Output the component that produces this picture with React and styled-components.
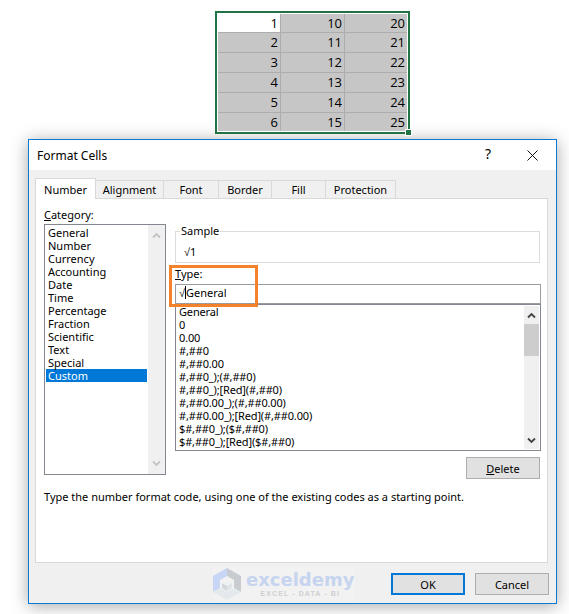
import React from 'react';
import styled, { createGlobalStyle } from 'styled-components';

const GlobalStyle = createGlobalStyle`
  html, body {
    margin: 0;
    padding: 0;
    background: #ffffff;
    overflow: hidden;
  }
  body {
    font-family: "Noto Sans", "Liberation Sans", sans-serif;
    font-size: 11px;
    color: #000000;
  }
`;

const rows = [
  [1, 10, 20],
  [2, 11, 21],
  [3, 12, 22],
  [4, 13, 23],
  [5, 14, 24],
  [6, 15, 25],
];

const categories = [
  'General', 'Number', 'Currency', 'Accounting', 'Date', 'Time', 'Percentage',
  'Fraction', 'Scientific', 'Text', 'Special', 'Custom',
];

const formats = [
  'General', '0', '0.00', '#,##0', '#,##0.00', '#,##0_);(#,##0)',
  '#,##0_);[Red](#,##0)', '#,##0.00_);(#,##0.00)', '#,##0.00_);[Red](#,##0.00)',
  '$#,##0_);($#,##0)', '$#,##0_);[Red]($#,##0)',
];

const tabs = ['Number', 'Alignment', 'Font', 'Border', 'Fill', 'Protection'];
const tabWidths = [61, 68, 55, 53, 54, 70];

const Chevron = ({ down, color }) => (
  <svg width="9" height="7" viewBox="0 0 9 7" style={{ transform: down ? 'rotate(180deg)' : 'none' }}>
    <path d="M1 5.5 L4.5 2 L8 5.5" fill="none" stroke={color} strokeWidth="1.8" />
  </svg>
);

const CubeLogo = () => (
  <svg width="28" height="32" viewBox="0 0 28 32">
    <polygon points="14,0 0,8 0,24 7,20 7,12 14,8" fill="#c6d6f4" />
    <polygon points="14,0 28,8 28,24 21,20 21,12 14,8" fill="#c8ccd0" />
    <polygon points="0,24 14,32 28,24 21,20 14,24 7,20" fill="#e3e9ed" />
    <polygon points="14,12 19,15 14,18 9,15" fill="#eef0f2" />
    <polygon points="9,15 14,18 14,23 9,20" fill="#d3d8de" />
    <polygon points="19,15 14,18 14,23 19,20" fill="#dfe3e8" />
  </svg>
);

export default function App() {
  return (
    <Page>
      <GlobalStyle />
      <Sheet>
        <SheetGrid>
          {rows.flat().map((value, i) => (
            <Cell key={i} $active={i === 0}>{value}</Cell>
          ))}
        </SheetGrid>
        <FillHandle />
      </Sheet>

      <Dialog>
        <TitleBar>
          <Title>Format Cells</Title>
          <HelpMark>?</HelpMark>
          <CloseIcon width="11" height="11" viewBox="0 0 11 11">
            <path d="M0.5 0.5 L10.5 10.5 M10.5 0.5 L0.5 10.5" stroke="#111" strokeWidth="1" fill="none" />
          </CloseIcon>
        </TitleBar>

        <Body>
          <TabRow>
            {tabs.map((tab, i) => (
              <Tab key={tab} $active={i === 0} $width={tabWidths[i]}>{tab}</Tab>
            ))}
          </TabRow>

          <Panel>
            <Columns>
              <LeftColumn>
                <FieldLabel><u>C</u>ategory:</FieldLabel>
                <CategoryBox>
                  <CategoryList>
                    {categories.map((name) => (
                      <CategoryItem key={name} $selected={name === 'Custom'}>{name}</CategoryItem>
                    ))}
                  </CategoryList>
                  <CategoryScroll>
                    <Chevron color="#c4c4c4" />
                    <Chevron down color="#c4c4c4" />
                  </CategoryScroll>
                </CategoryBox>
              </LeftColumn>

              <RightColumn>
                <SampleBox>
                  <SampleLegend>Sample</SampleLegend>
                  <SampleValue>√1</SampleValue>
                </SampleBox>
                <TypeLabel><u>T</u>ype:</TypeLabel>
                <TypeInput>√<Caret />General</TypeInput>
                <FormatBox>
                  <FormatList>
                    {formats.map((code) => (
                      <FormatItem key={code}>{code}</FormatItem>
                    ))}
                  </FormatList>
                  <FormatScroll>
                    <ArrowSlot><Chevron color="#444" /></ArrowSlot>
                    <Thumb />
                    <ArrowSlot $end><Chevron down color="#444" /></ArrowSlot>
                  </FormatScroll>
                </FormatBox>
                <DeleteRow>
                  <DialogButton $width={74}><u>D</u>elete</DialogButton>
                </DeleteRow>
                <Highlight />
              </RightColumn>
            </Columns>
            <Description>
              Type the number format code, using one of the existing codes as a starting point.
            </Description>
          </Panel>

          <Footer>
            <Watermark>
              <CubeLogo />
              <WatermarkText>
                <WatermarkName>exceldemy</WatermarkName>
                <WatermarkTag>EXCEL - DATA - BI</WatermarkTag>
              </WatermarkText>
            </Watermark>
            <DialogButton $width={74} $primary>OK</DialogButton>
            <DialogButton $width={74}>Cancel</DialogButton>
          </Footer>
        </Body>
      </Dialog>
    </Page>
  );
}

const Page = styled.div`
  width: 569px;
  height: 614px;
  padding-top: 11px;
  box-sizing: border-box;
  display: flex;
  flex-direction: column;
  overflow: hidden;
`;

const Sheet = styled.div`
  position: relative;
  z-index: 1;
  flex: none;
  margin-left: 215px;
  width: 195px;
  height: 123px;
  box-sizing: border-box;
  border: 2px solid #217346;
  padding: 1px;
  background: #ffffff;
`;

const SheetGrid = styled.div`
  display: grid;
  grid-template-columns: 62px 63px 62px;
  grid-template-rows: 18px repeat(4, 19px) 18px;
  gap: 1px;
  background: #adadad;
`;

const Cell = styled.div`
  background: ${(p) => (p.$active ? '#ffffff' : '#c6c6c6')};
  font-family: "Open Sans", sans-serif;
  font-size: 13px;
  line-height: 18px;
  text-align: right;
  padding-right: 2px;
`;

const FillHandle = styled.div`
  position: absolute;
  right: -4px;
  bottom: -4px;
  width: 5px;
  height: 5px;
  background: #217346;
  border: 1px solid #ffffff;
`;

const Dialog = styled.div`
  margin: 5px 0 0 28px;
  width: 529px;
  height: 465px;
  flex: none;
  box-sizing: border-box;
  border: 1px solid #0a7ad1;
  background: #f0f0f0;
  box-shadow: 0 2px 16px rgba(0, 0, 0, 0.35);
  display: flex;
  flex-direction: column;
`;

const TitleBar = styled.div`
  height: 30px;
  flex: none;
  background: #ffffff;
  display: flex;
  align-items: center;
  padding-left: 8px;
`;

const Title = styled.div`
  font-size: 12px;
  flex: 1;
`;

const HelpMark = styled.div`
  font-size: 14px;
  margin: -3px 36px 0 0;
`;

const CloseIcon = styled.svg`
  margin-right: 18px;
`;

const Body = styled.div`
  flex: 1;
  display: flex;
  flex-direction: column;
  padding: 8px 8px 0 6px;
  min-height: 0;
`;

const TabRow = styled.div`
  display: flex;
  align-items: flex-end;
  height: 20px;
  flex: none;
`;

const Tab = styled.div`
  position: relative;
  z-index: ${(p) => (p.$active ? 1 : 0)};
  width: ${(p) => p.$width}px;
  height: ${(p) => (p.$active ? 21 : 18)}px;
  margin-bottom: ${(p) => (p.$active ? -1 : 0)}px;
  box-sizing: border-box;
  border: 1px solid #d9d9d9;
  border-left-width: ${(p) => (p.$active ? 1 : 0)}px;
  border-bottom: ${(p) => (p.$active ? 'none' : '0')};
  background: ${(p) => (p.$active ? '#ffffff' : '#f0f0f0')};
  display: flex;
  align-items: center;
  justify-content: center;
`;

const Panel = styled.div`
  flex: none;
  height: 365px;
  box-sizing: border-box;
  background: #ffffff;
  border: 1px solid #d9d9d9;
  padding: 10px 0 0 8px;
`;

const Columns = styled.div`
  display: flex;
  gap: 9px;
`;

const LeftColumn = styled.div`
  width: 122px;
  flex: none;
`;

const FieldLabel = styled.div`
  height: 15px;
  line-height: 12px;
`;

const CategoryBox = styled.div`
  height: 251px;
  box-sizing: border-box;
  border: 1px solid #828790;
  display: flex;
  background: #ffffff;
`;

const CategoryList = styled.div`
  flex: 1;
  padding: 1px 1px 0 1px;
`;

const CategoryItem = styled.div`
  height: 13px;
  line-height: 13px;
  padding-left: 2px;
  background: ${(p) => (p.$selected ? '#0078d7' : 'transparent')};
  color: ${(p) => (p.$selected ? '#ffffff' : '#000000')};
`;

const CategoryScroll = styled.div`
  width: 17px;
  background: #f0f0f0;
  display: flex;
  flex-direction: column;
  justify-content: space-between;
  align-items: center;
  padding: 7px 0;
  box-sizing: border-box;
`;

const RightColumn = styled.div`
  position: relative;
  width: 366px;
  flex: none;
  padding-top: 22px;
`;

const SampleBox = styled.div`
  position: relative;
  width: 365px;
  height: 32px;
  box-sizing: border-box;
  border: 1px solid #dcdcdc;
  padding: 13px 0 0 8px;
`;

const SampleLegend = styled.div`
  position: absolute;
  top: -8px;
  left: 4px;
  background: #ffffff;
  padding: 0 1px;
  line-height: 14px;
`;

const SampleValue = styled.div`
  line-height: 13px;
`;

const TypeLabel = styled.div`
  margin-top: 5px;
  height: 16px;
  line-height: 12px;
`;

const TypeInput = styled.div`
  height: 20px;
  box-sizing: border-box;
  border: 1px solid #9a9a9f;
  padding-left: 3px;
  line-height: 16px;
`;

const Caret = styled.span`
  display: inline-block;
  width: 1px;
  height: 13px;
  background: #000000;
  vertical-align: -2px;
`;

const FormatBox = styled.div`
  height: 147px;
  box-sizing: border-box;
  border: 1px solid #828790;
  display: flex;
`;

const FormatList = styled.div`
  flex: 1;
  padding: 0 0 0 3px;
  letter-spacing: -0.15px;
`;

const FormatItem = styled.div`
  height: 13px;
  line-height: 13px;
`;

const FormatScroll = styled.div`
  width: 15px;
  margin: 1px 1px 1px 0;
  background: #f0f0f0;
  display: flex;
  flex-direction: column;
`;

const ArrowSlot = styled.div`
  height: 18px;
  flex: none;
  margin-top: ${(p) => (p.$end ? 'auto' : '0')};
  display: flex;
  align-items: center;
  justify-content: center;
`;

const Thumb = styled.div`
  height: 32px;
  background: #cdcdcd;
`;

const DeleteRow = styled.div`
  display: flex;
  justify-content: flex-end;
  margin: 6px 1px 0 0;
`;

const DialogButton = styled.div`
  width: ${(p) => p.$width}px;
  height: 22px;
  flex: none;
  box-sizing: border-box;
  background: #e1e1e1;
  border: ${(p) => (p.$primary ? '2px solid #0078d7' : '1px solid #adadad')};
  display: flex;
  align-items: center;
  justify-content: center;
  white-space: pre;
`;

const Highlight = styled.div`
  position: absolute;
  left: -6px;
  top: 56px;
  width: 89px;
  height: 42px;
  box-sizing: border-box;
  border: 3px solid #f5822a;
`;

const Description = styled.div`
  margin-top: 10px;
  line-height: 15px;
`;

const Footer = styled.div`
  flex: 1;
  display: flex;
  align-items: flex-start;
  padding: 10px 0 0 178px;
  margin-right: -2px;
  gap: 10px;
`;

const Watermark = styled.div`
  width: 142px;
  height: 34px;
  margin: -6px 26px 0 0;
  flex: none;
  display: flex;
  align-items: center;
  gap: 5px;
  background: #f2f2f2;
`;

const WatermarkText = styled.div`
  display: flex;
  flex-direction: column;
  align-items: center;
`;

const WatermarkName = styled.div`
  font-family: "DejaVu Sans", sans-serif;
  font-weight: 700;
  font-size: 18px;
  line-height: 20px;
  color: #c6d4f0;
`;

const WatermarkTag = styled.div`
  font-family: "Liberation Sans", sans-serif;
  font-weight: 700;
  font-size: 7px;
  letter-spacing: 1.1px;
  line-height: 8px;
  color: #cfcfcf;
`;
